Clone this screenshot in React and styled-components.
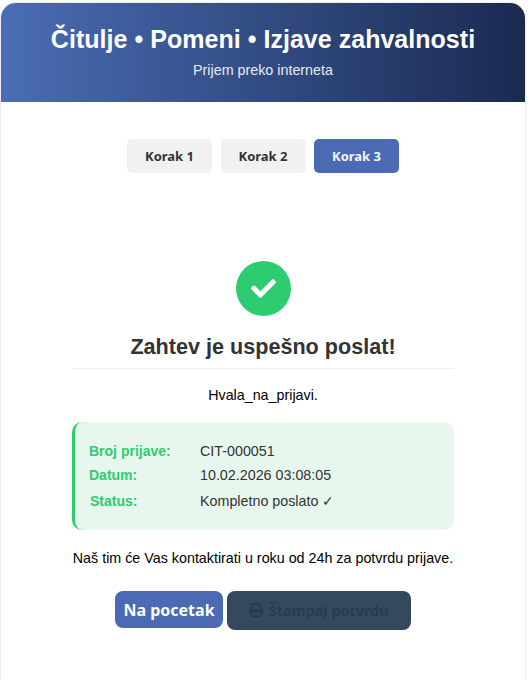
import React from 'react'
import styled, { createGlobalStyle } from 'styled-components'
import { FaCheck, FaPrint } from 'react-icons/fa'

const GlobalStyle = createGlobalStyle`
  html, body {
    margin: 0;
    padding: 0;
    height: 680px;
    overflow: hidden;
    background: #fff;
    font-family: "Liberation Sans", Arial, sans-serif;
  }
`
const Page = styled.div`
  width: 524px;
  height: 677px;
  margin: 3px 0 0 1px;
  border-radius: 15px 15px 0 0;
  background: #fff;
  box-shadow: 0 0 2px rgba(0, 0, 0, 0.25);
  overflow: hidden;
`
const Header = styled.header`
  height: 99px;
  padding-top: 20px;
  box-sizing: border-box;
  text-align: center;
  color: #fff;
  background: linear-gradient(90deg, #4a6db5 0%, #1a2a50 100%);
`
const Title = styled.h1`
  margin: 0;
  font-size: 25px;
  line-height: 32px;
  font-weight: 700;
  letter-spacing: 0.03px;
`
const Subtitle = styled.p`
  margin: 7px 0 0;
  font-size: 14.3px;
  line-height: 16px;
  color: #e6ebf5;
`
const Steps = styled.nav`
  display: flex;
  justify-content: center;
  gap: 8.5px;
  margin-top: 37px;
`
const Step = styled.div`
  width: 85px;
  height: 34px;
  box-sizing: border-box;
  display: flex;
  align-items: center;
  justify-content: center;
  border-radius: 5px;
  font-family: "Noto Sans", sans-serif;
  font-size: 13px;
  font-weight: 700;
  color: ${({ $active }) => ($active ? '#f5f5f5' : '#333')};
  background: ${({ $active }) => ($active ? '#4a6ab3' : '#f1f1f1')};
`
const Content = styled.main`
  margin: 88px 71px 0;
  display: flex;
  flex-direction: column;
  align-items: stretch;
  text-align: center;
`
const SuccessIcon = styled.div`
  width: 55px;
  height: 55px;
  align-self: center;
  display: flex;
  align-items: center;
  justify-content: center;
  border-radius: 50%;
  color: #fff;
  font-size: 25px;
  background: #2ecc71;
`
const Heading = styled.h2`
  margin: 18px 0 0;
  padding-bottom: 9px;
  border-bottom: 1px solid #eee;
  font-size: 21.6px;
  line-height: 25px;
  font-weight: 700;
  color: #333;
`
const Thanks = styled.p`
  margin: 18px 0 0;
  font-size: 14.3px;
  line-height: 16px;
  color: #000;
`
const InfoCard = styled.section`
  height: 108px;
  margin-top: 19px;
  padding: 17px 14px 0;
  box-sizing: border-box;
  border-left: 3px solid #2ecc71;
  border-radius: 10px;
  background: #e8f7ee;
  text-align: left;
  font-size: 14.3px;
`
const InfoRow = styled.div`
  display: grid;
  grid-template-columns: 111px 1fr;
  height: ${({ $tall }) => ($tall ? '26px' : '24px')};
  line-height: ${({ $tall }) => ($tall ? '28px' : '24px')};
`
const InfoLabel = styled.span`
  padding-left: ${({ $nudge }) => ($nudge ? '1px' : '0')};
  font-size: 14px;
  font-weight: 700;
  color: #2ecc71;
`
const InfoValue = styled.span`
  color: #333;
`
const Notice = styled.p`
  margin: 20px 0 0;
  font-size: 14.3px;
  line-height: 16px;
  color: #000;
`
const Actions = styled.div`
  display: flex;
  justify-content: center;
  align-items: flex-start;
  gap: 4px;
  margin-top: 25px;
`
const Button = styled.button`
  height: ${({ $dark }) => ($dark ? '39px' : '37px')};
  padding: 0;
  width: ${({ $dark }) => ($dark ? '184px' : '108px')};
  display: flex;
  align-items: center;
  justify-content: center;
  gap: 5px;
  border: 0;
  border-radius: 8px;
  font-family: "Noto Sans", sans-serif;
  font-size: ${({ $dark }) => ($dark ? '14.4px' : '16px')};
  font-weight: 700;
  color: ${({ $dark }) => ($dark ? '#2b3a4c' : '#fff')};
  background: ${({ $dark }) => ($dark ? '#34495e' : '#4a6ab3')};
`

const App = () => (
  <Page>
    <GlobalStyle />
    <Header>
      <Title>Čitulje • Pomeni • Izjave zahvalnosti</Title>
      <Subtitle>Prijem preko interneta</Subtitle>
    </Header>
    <Steps>
      <Step>Korak 1</Step>
      <Step>Korak 2</Step>
      <Step $active>Korak 3</Step>
    </Steps>
    <Content>
      <SuccessIcon>
        <FaCheck />
      </SuccessIcon>
      <Heading>Zahtev je uspešno poslat!</Heading>
      <Thanks>Hvala_na_prijavi.</Thanks>
      <InfoCard>
        <InfoRow>
          <InfoLabel>Broj prijave:</InfoLabel>
          <InfoValue>CIT-000051</InfoValue>
        </InfoRow>
        <InfoRow>
          <InfoLabel>Datum:</InfoLabel>
          <InfoValue>10.02.2026 03:08:05</InfoValue>
        </InfoRow>
        <InfoRow $tall>
          <InfoLabel $nudge>Status:</InfoLabel>
          <InfoValue>Kompletno poslato ✓</InfoValue>
        </InfoRow>
      </InfoCard>
      <Notice>Naš tim će Vas kontaktirati u roku od 24h za potvrdu prijave.</Notice>
      <Actions>
        <Button>Na pocetak</Button>
        <Button $dark>
          <FaPrint />
          Štampaj potvrdu
        </Button>
      </Actions>
    </Content>
  </Page>
)

export default App
